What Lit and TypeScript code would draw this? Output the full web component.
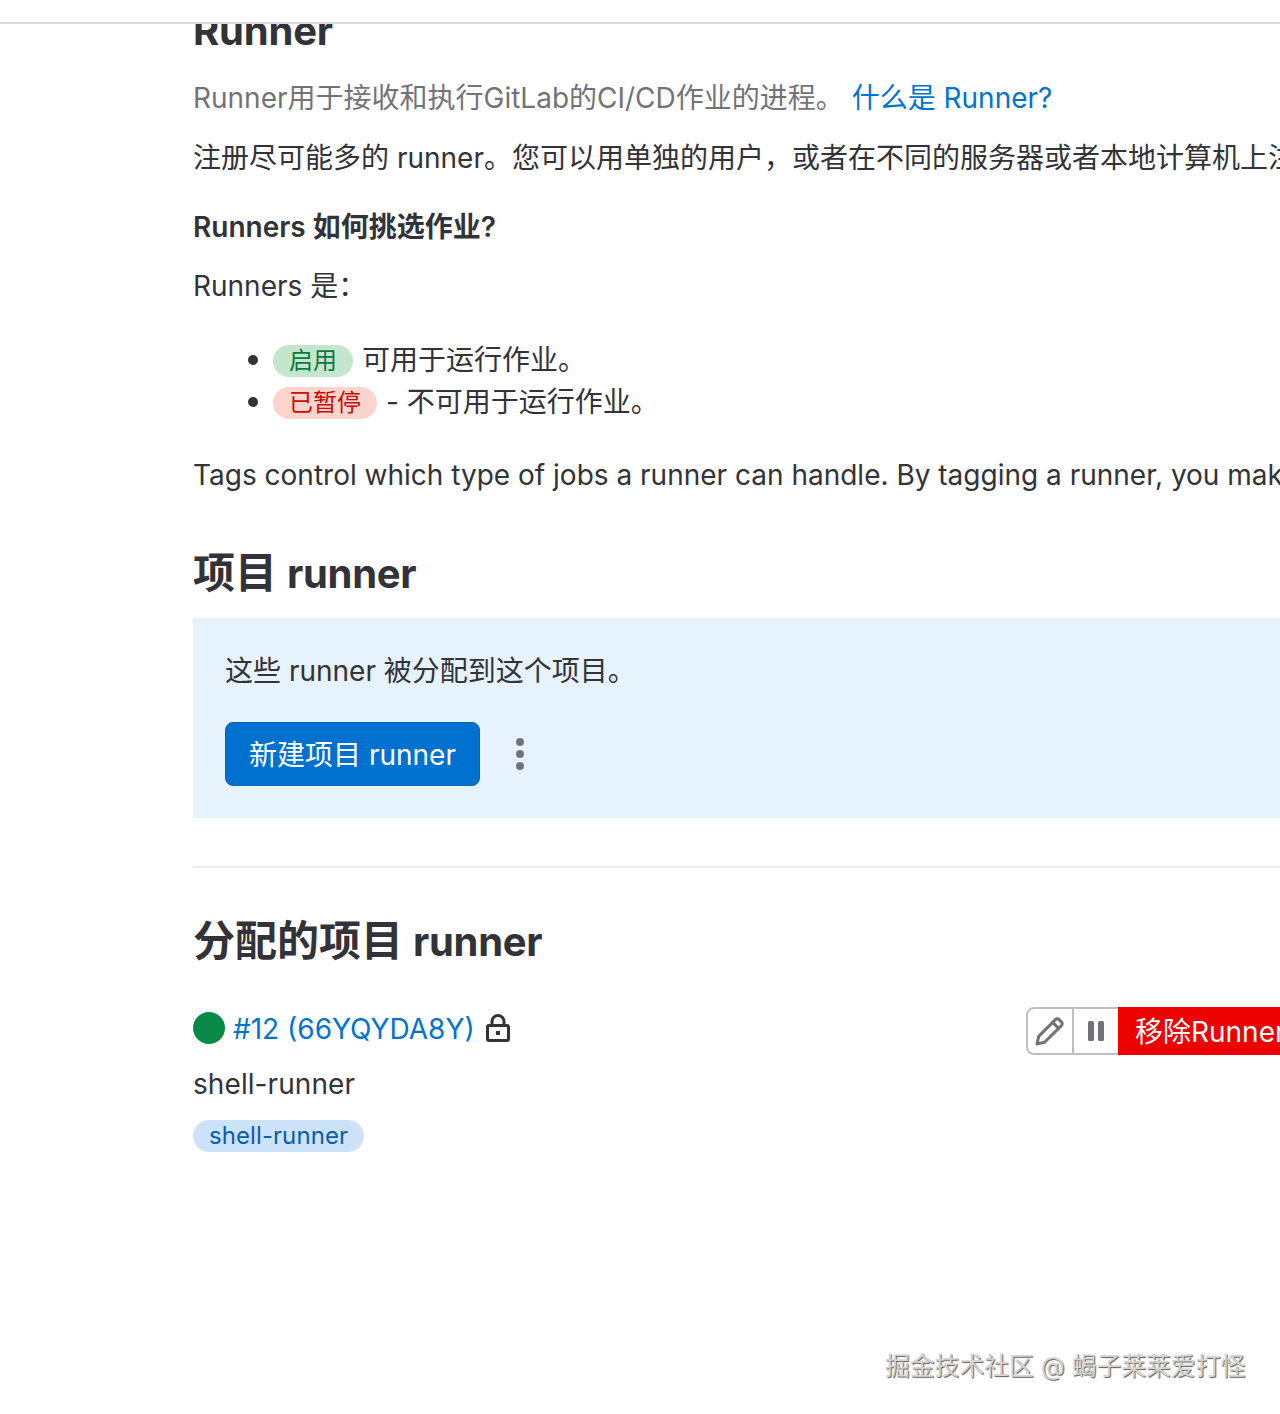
import { LitElement, html, css } from "lit";
import { customElement } from "lit/decorators.js";

@customElement("app-root")
export class AppRoot extends LitElement {
  static styles = css`
    :host {
      display: block;
      position: relative;
      width: 1280px;
      height: 1414px;
      overflow: hidden;
      background: #fff;
      color: #333238;
      font-family: Inter, "Noto Sans CJK SC", sans-serif;
      font-size: 28px;
      line-height: 40px;
    }
    .topbar {
      height: 22px;
      background: #fff;
      border-bottom: 2px solid #dcdcde;
      position: relative;
      z-index: 2;
    }
    .page {
      padding-left: 193px;
      white-space: nowrap;
      overflow: hidden;
      height: 1390px;
    }
    h1 {
      margin: -21px 0 0;
      font-size: 40px;
      line-height: 56px;
      font-weight: 700;
      letter-spacing: -0.2px;
    }
    .muted { color: #737278; margin: 19px 0 0; line-height: 40px; }
    a { color: #0073cc; text-decoration: none; }
    p { margin: 20px 0 0; }
    h3 { margin: 29px 0 0; font-size: 28px; line-height: 40px; font-weight: 600; }
    h3 + p { margin-top: 19px; }
    ul { margin: 33px 0 0; padding: 0 0 0 80px; list-style: none; }
    li { position: relative; height: 42px; display: flex; align-items: center; }
    li::before {
      content: "";
      position: absolute;
      left: -25px;
      top: 16px;
      width: 10px;
      height: 10px;
      border-radius: 50%;
      background: #333238;
    }
    .badge {
      display: inline-flex;
      align-items: center;
      height: 32px;
      padding: 0 16px;
      border-radius: 16px;
      font-size: 24px;
      line-height: 32px;
    }
    .ok { background: #c3e6cd; color: #0a7a3c; margin: 2px 9px 0 0; }
    .paused { background: #fdd4cd; color: #c50f00; margin: 2px 9px 0 0; }
    .tagp { margin-top: 32px; }
    h2 { margin: 0; font-size: 42px; line-height: 56px; font-weight: 700; }
    .lat { font-size: 40px; line-height: 1; letter-spacing: -0.3px; }
    .h2a { margin-top: 50px; }
    .box {
      margin-top: 17px;
      height: 200px;
      box-sizing: border-box;
      padding: 33px 32px 32px;
      background: #e6f2fc;
    }
    .box p { margin: 0; }
    .actions { display: flex; align-items: center; margin-top: 31px; }
    .primary {
      width: 255px;
      height: 64px;
      box-sizing: border-box;
      background: #0071ce;
      color: #fff;
      border: 1px solid #0a65b5;
      border-radius: 8px;
      font: inherit;
      padding: 2px 0 0;
    }
    .kebab { margin-left: 32px; display: flex; }
    hr { margin: 48px 0 0; border: 0; height: 2px; background: #ececef; }
    .h2b { margin-top: 45px; }
    .runner { display: flex; align-items: flex-start; margin-top: 38px; height: 48px; width: 1087px; }
    .left { display: flex; align-items: center; height: 42px; }
    .left a { padding-top: 1px; }
    .dot { width: 32px; height: 32px; border-radius: 50%; background: #078a46; margin-right: 8px; }
    .lock { margin-left: 11px; display: flex; }
    .group {
      margin-left: auto;
      display: flex;
      width: 254px;
      flex: none;
      height: 48px;
      overflow: hidden;
    }
    .ib {
      flex: none;
      box-sizing: border-box;
      height: 48px;
      display: flex;
      align-items: center;
      justify-content: center;
      background: #fff;
      border: 2px solid #bfbfc3;
    }
    .edit { width: 48px; border-radius: 8px 0 0 8px; }
    .pause { width: 44px; border-left: 0; border-right: 0; }
    .remove {
      flex: none;
      height: 48px;
      width: 162px;
      padding-left: 17px;
      box-sizing: border-box;
      background: #ed0000;
      color: #fff;
      line-height: 50px;
    }
    .name { margin: 9px 0 0; line-height: 40px; letter-spacing: 0.08px; }
    .tag { background: #cbe2f9; color: #0b5cad; margin-top: 16px; display: inline-flex; letter-spacing: 0.08px; }
    .mark {
      position: absolute;
      left: 885px;
      top: 1348px;
      font-size: 24.8px;
      line-height: 36px;
      color: #d4d4d4;
      text-shadow: 1px 1px 1px #5c5c5c, -1px -1px 0 #ffffff;
      white-space: nowrap;
    }
  `;

  render() {
    return html`
      <div class="topbar"></div>
      <div class="page">
        <h1>Runner</h1>
        <div class="muted">Runner用于接收和执行GitLab的CI/CD作业的进程。 <a>什么是 Runner?</a></div>
        <p>注册尽可能多的 runner。您可以用单独的用户，或者在不同的服务器或者本地计算机上注册多个 runner，以便更好地运行您的作业。</p>
        <h3>Runners 如何挑选作业?</h3>
        <p>Runners 是：</p>
        <ul>
          <li><span class="badge ok">启用</span>可用于运行作业。</li>
          <li><span class="badge paused">已暂停</span>- 不可用于运行作业。</li>
        </ul>
        <p class="tagp">Tags control which type of jobs a runner can handle. By tagging a runner, you make sure shared runners only handle the jobs they are equipped to run.</p>
        <h2 class="h2a">项目 <span class="lat">runner</span></h2>
        <div class="box">
          <p>这些 runner 被分配到这个项目。</p>
          <div class="actions">
            <button class="primary">新建项目 runner</button>
            <span class="kebab">
              <svg width="16" height="36" viewBox="0 0 16 36"><g fill="#737278"><circle cx="8" cy="6" r="4"/><circle cx="8" cy="18" r="4"/><circle cx="8" cy="30" r="4"/></g></svg>
            </span>
          </div>
        </div>
        <hr />
        <h2 class="h2b">分配的项目 <span class="lat">runner</span></h2>
        <div class="runner">
          <div class="left">
            <span class="dot"></span>
            <a>#12 (66YQYDA8Y)</a>
            <span class="lock">
              <svg width="24" height="28" viewBox="0 0 24 28" fill="none" stroke="#333238" stroke-width="3">
                <rect x="1.5" y="11.5" width="21" height="15" rx="1.5"/>
                <path d="M6 11.5V7.5a6 6 0 0 1 12 0v4"/>
                <rect x="10" y="17" width="4" height="4" fill="#333238" stroke="none"/>
              </svg>
            </span>
          </div>
          <div class="group">
            <span class="ib edit">
              <svg width="30" height="30" viewBox="0 0 30 30" fill="none" stroke="#737278" stroke-width="3" stroke-linejoin="round">
                <path d="M2 28l1.7-7.6L20.4 3.6a2.6 2.6 0 0 1 3.7 0l2.3 2.3a2.6 2.6 0 0 1 0 3.7L9.6 26.3z"/>
                <path d="M17.6 6.4l6 6"/>
              </svg>
            </span>
            <span class="ib pause">
              <svg width="16" height="20" viewBox="0 0 16 20" fill="#737278"><rect x="0" y="0" width="6" height="20" rx="1.5"/><rect x="10" y="0" width="6" height="20" rx="1.5"/></svg>
            </span>
            <span class="remove">移除Runner</span>
          </div>
        </div>
        <div class="name">shell-runner</div>
        <span class="badge tag">shell-runner</span>
      </div>
      <div class="mark">掘金技术社区 @ 蝎子莱莱爱打怪</div>
    `;
  }
}
